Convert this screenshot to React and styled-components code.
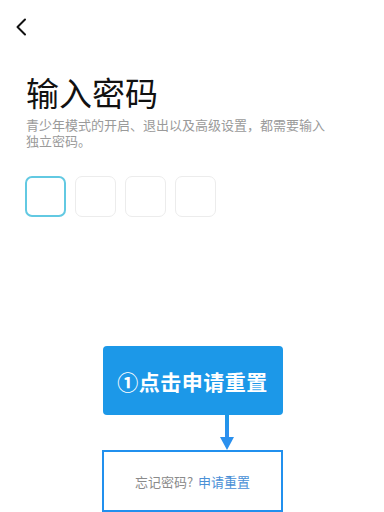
import React from 'react'
import styled, { createGlobalStyle } from 'styled-components'

const GlobalStyle = createGlobalStyle`
  html, body {
    margin: 0;
    padding: 0;
    background: #ffffff;
  }
  body {
    font-family: "Noto Sans CJK SC", "Noto Sans", sans-serif;
  }
`

const Page = styled.div`
  width: 384px;
  height: 512px;
  overflow: hidden;
  display: flex;
  flex-direction: column;
  background: #ffffff;
`

const TopBar = styled.div`
  height: 52px;
  display: flex;
  align-items: center;
  padding-left: 12px;
`

const BackButton = styled.button`
  border: none;
  background: none;
  padding: 0;
  width: 18px;
  height: 22px;
  display: flex;
  align-items: center;
  justify-content: center;
  margin-top: 1px;
`

const Content = styled.div`
  padding: 0 26px;
  display: flex;
  flex-direction: column;
`

const Title = styled.h1`
  margin: 17px 0 0;
  font-size: 33px;
  font-weight: 400;
  line-height: 46px;
  color: #111111;
  letter-spacing: 0;
`

const Hint = styled.p`
  margin: 2px 0 0;
  width: 310px;
  font-size: 13px;
  line-height: 16px;
  color: #9a9a9a;
`

const CodeRow = styled.div`
  display: flex;
  gap: 9px;
  margin-top: 27px;
  margin-left: -1px;
`

const CodeBox = styled.div`
  width: 41px;
  height: 41px;
  box-sizing: border-box;
  border-radius: 7px;
  border: ${p => (p.$active ? '2px solid #62c9e2' : '1px solid #ececec')};
`

const Spacer = styled.div`
  flex: 1;
`

const Guide = styled.div`
  display: flex;
  flex-direction: column;
  align-items: center;
  margin-left: 102px;
  width: 181px;
`

const Callout = styled.div`
  width: 180px;
  height: 69px;
  background: #1c98e8;
  border-radius: 4px;
  display: flex;
  align-items: center;
  justify-content: center;
  color: #ffffff;
  font-size: 21px;
  font-weight: 700;
  letter-spacing: 0.5px;
`

const ArrowWrap = styled.div`
  width: 181px;
  height: 35px;
  display: flex;
  justify-content: flex-end;
  padding-right: 48px;
  box-sizing: border-box;
`

const ForgotBox = styled.div`
  width: 181px;
  height: 62px;
  box-sizing: border-box;
  border: 2px solid #2190ee;
  display: flex;
  align-items: center;
  justify-content: center;
  font-size: 13px;
  color: #8a8a8a;
`

const Link = styled.span`
  color: #4a8fd6;
  margin-left: 5px;
`

export default function App() {
  return (
    <Page>
      <GlobalStyle />
      <TopBar>
        <BackButton aria-label="返回">
          <svg width="12" height="18" viewBox="0 0 12 18">
            <path d="M10 1.5 L2.5 9 L10 16.5" fill="none" stroke="#111" strokeWidth="2" strokeLinecap="round" strokeLinejoin="round" />
          </svg>
        </BackButton>
      </TopBar>
      <Content>
        <Title>输入密码</Title>
        <Hint>青少年模式的开启、退出以及高级设置，都需要输入独立密码。</Hint>
        <CodeRow>
          <CodeBox $active />
          <CodeBox />
          <CodeBox />
          <CodeBox />
        </CodeRow>
      </Content>
      <Spacer />
      <Guide>
        <Callout>①点击申请重置</Callout>
        <ArrowWrap>
          <svg width="16" height="35" viewBox="0 0 16 35">
            <defs>
              <linearGradient id="ag" x1="0" y1="0" x2="0" y2="1">
                <stop offset="0" stopColor="#1c98e8" />
                <stop offset="1" stopColor="#2f8ef0" />
              </linearGradient>
            </defs>
            <rect x="6" y="0" width="4" height="23" fill="url(#ag)" />
            <polygon points="1,22 15,22 8,35" fill="#2a90ee" />
          </svg>
        </ArrowWrap>
        <ForgotBox>
          忘记密码?<Link>申请重置</Link>
        </ForgotBox>
      </Guide>
    </Page>
  )
}
